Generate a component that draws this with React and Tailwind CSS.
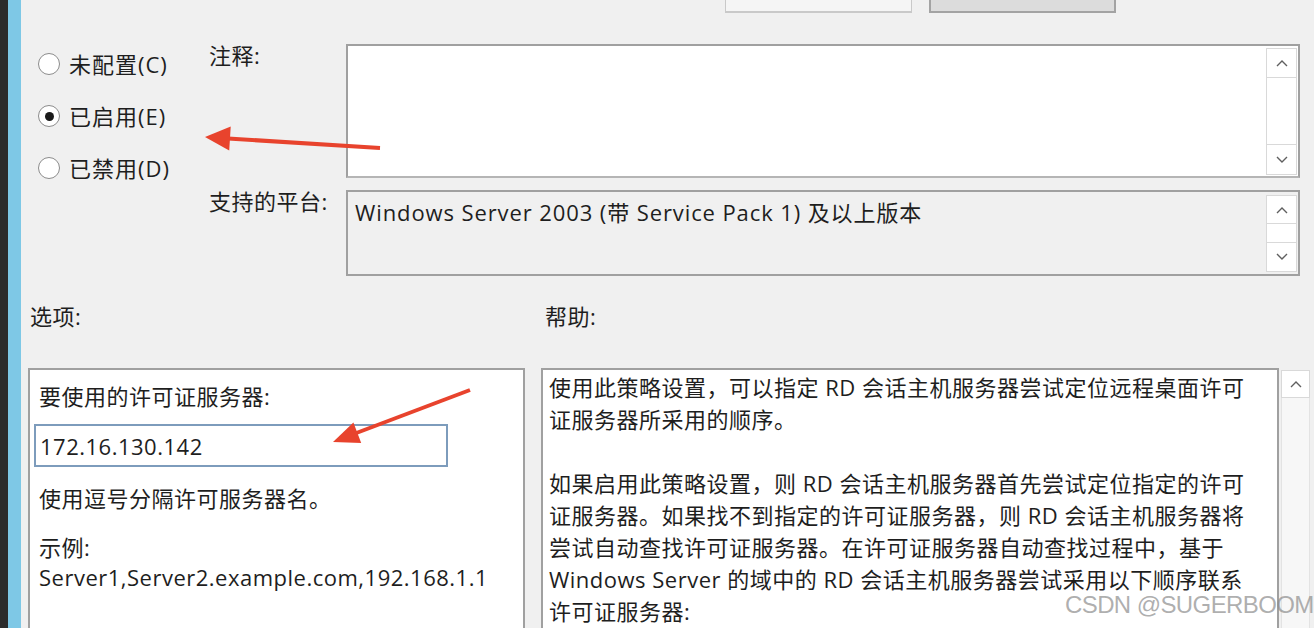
import React from 'react';

const FONT = "font-['Open_Sans','Noto_Sans_CJK_SC',sans-serif]";

const Chevron = ({ up }) => (
  <svg width="12" height="8" viewBox="0 0 12 8">
    <path d={up ? 'M1 7L6 2l5 5' : 'M1 1l5 5 5-5'} stroke="#5f5f5f" strokeWidth="1.4" fill="none" />
  </svg>
);

const ScrollBar = ({ short }) => (
  <div className="flex flex-col w-[31px] h-full">
    <div className="h-[30px] border border-[#d9d9d9] bg-white flex items-center justify-center">
      <Chevron up />
    </div>
    <div className={`flex-1 border-x border-[#d9d9d9] bg-white ${short ? 'min-h-[18px]' : ''}`} />
    <div className="h-[31px] border border-[#d9d9d9] bg-white flex items-center justify-center">
      <Chevron />
    </div>
  </div>
);

const Radio = ({ label, checked }) => (
  <div className="h-[40px] flex items-center">
    <div className="w-[22px] h-[22px] rounded-full border border-[#8c8c8c] bg-white flex items-center justify-center">
      {checked && <div className="w-[9px] h-[9px] rounded-full bg-[#1a1a1a]" />}
    </div>
    <span className="ml-[9px] leading-[22px] tracking-[1px] text-[#1e1e1e]">{label}</span>
  </div>
);

const helpLines = [
  '使用此策略设置，可以指定 RD 会话主机服务器尝试定位远程桌面许可',
  '证服务器所采用的顺序。',
  '',
  '如果启用此策略设置，则 RD 会话主机服务器首先尝试定位指定的许可',
  '证服务器。如果找不到指定的许可证服务器，则 RD 会话主机服务器将',
  '尝试自动查找许可证服务器。在许可证服务器自动查找过程中，基于',
  'Windows Server 的域中的 RD 会话主机服务器尝试采用以下顺序联系',
  '许可证服务器:',
];

const Arrows = () => (
  <svg className="absolute inset-0 pointer-events-none" width="1314" height="628">
    <line x1="380" y1="148" x2="228" y2="138.5" stroke="#e8432d" strokeWidth="4" />
    <polygon points="205,137 230.7,126.6 229.2,150.6" fill="#e8432d" />
    <line x1="470" y1="390" x2="355" y2="433.5" stroke="#e8432d" strokeWidth="4" />
    <polygon points="333,442 353.4,422.5 361.2,443.1" fill="#e8432d" />
  </svg>
);

export default function App() {
  return (
    <div className={`relative flex w-[1314px] h-[628px] overflow-hidden bg-[#f0f0f0] text-[#1e1e1e] text-[22px] tracking-[0.5px] ${FONT}`}>
      <div className="w-[8px] bg-[#2b2b2b]" />
      <div className="w-[13px] bg-[#7ec8e6]" />

      <div className="flex-1 flex flex-col">
        {/* top buttons, cut off by the screenshot */}
        <div className="flex shrink-0 h-[13px] pl-[704px] gap-[17px]">
          <div className="w-[187px] h-full bg-[#f5f5f5] border-x border-b-2 border-[#c9c9c9]" />
          <div className="w-[187px] h-full bg-[#dcdcdc] border-x-2 border-b-2 border-[#a3a3a3]" />
        </div>

        {/* state + comment + platform */}
        <div className="flex shrink-0 mt-[31px]">
          <div className="w-[188px] pl-[17px] flex flex-col gap-[12px]">
            <Radio label="未配置(C)" />
            <Radio label="已启用(E)" checked />
            <Radio label="已禁用(D)" />
          </div>
          <div className="flex flex-col gap-[12px]">
            <div className="flex">
              <div className="w-[137px] leading-[22px]">注释:</div>
              <div className="w-[954px] h-[134px] border-2 border-[#a0a0a0] border-b-[#b5b5b5] bg-white flex justify-end pt-[2px] pb-[1px] pr-[1px]">
                <ScrollBar />
              </div>
            </div>
            <div className="flex">
              <div className="w-[137px] leading-[22px] whitespace-nowrap">支持的平台:</div>
              <div className="w-[954px] h-[86px] border-2 border-[#a0a0a0] bg-[#f0f0f0] flex justify-between pt-[3px] pb-[2px] pr-[1px]">
                <div className="pl-[7px] pt-[2px] leading-[30px] tracking-[0.9px] whitespace-nowrap">
                  Windows Server 2003 (带 Service Pack 1) 及以上版本
                </div>
                <ScrollBar short />
              </div>
            </div>
          </div>
        </div>

        {/* options + help labels */}
        <div className="flex shrink-0 mt-[29px] leading-[22px]">
          <div className="w-[524px] pl-[9px]">选项:</div>
          <div>帮助:</div>
        </div>

        <div className="flex shrink-0 mt-[41px] pl-[7px]">
          <div className="w-[497px] h-[280px] shrink-0 border-2 border-[#a0a0a0] bg-white pl-[9px] pt-[15px]">
            <div className="leading-[22px] whitespace-nowrap">要使用的许可证服务器:</div>
            <div className="ml-[-5px] mt-[17px] w-[414px] h-[43px] border-2 border-[#7d9cbc] flex items-center pl-[4px] leading-[22px]">
              172.16.130.142
            </div>
            <div className="mt-[20px] leading-[22px] whitespace-nowrap">使用逗号分隔许可服务器名。</div>
            <div className="mt-[23px] leading-[30px]">示例:</div>
            <div className="leading-[30px] whitespace-nowrap">Server1,Server2.example.com,192.168.1.1</div>
          </div>
          <div className="ml-[16px] w-[738px] h-[280px] shrink-0 border-2 border-[#a0a0a0] bg-white pl-[6px] pt-[1px] leading-[32px]">
            {helpLines.map((line, i) => (
              <div key={i} className="h-[32px] whitespace-nowrap">{line}</div>
            ))}
          </div>
          <div className="ml-[2px] w-[29px] h-[280px] flex flex-col pt-[2px]">
            <div className="h-[28px] border border-[#d9d9d9] bg-white flex items-center justify-center">
              <Chevron up />
            </div>
            <div className="flex-1 border-x border-[#e3e3e3] bg-[#f7f7f7]" />
          </div>
        </div>
      </div>

      <Arrows />

      <div className="absolute left-[1065px] top-[590px] font-['Liberation_Sans',sans-serif] text-[24px] leading-[30px] tracking-[-0.6px] text-[#8c8c8c]/70 whitespace-nowrap">
        CSDN @SUGERBOOM
      </div>
    </div>
  );
}
